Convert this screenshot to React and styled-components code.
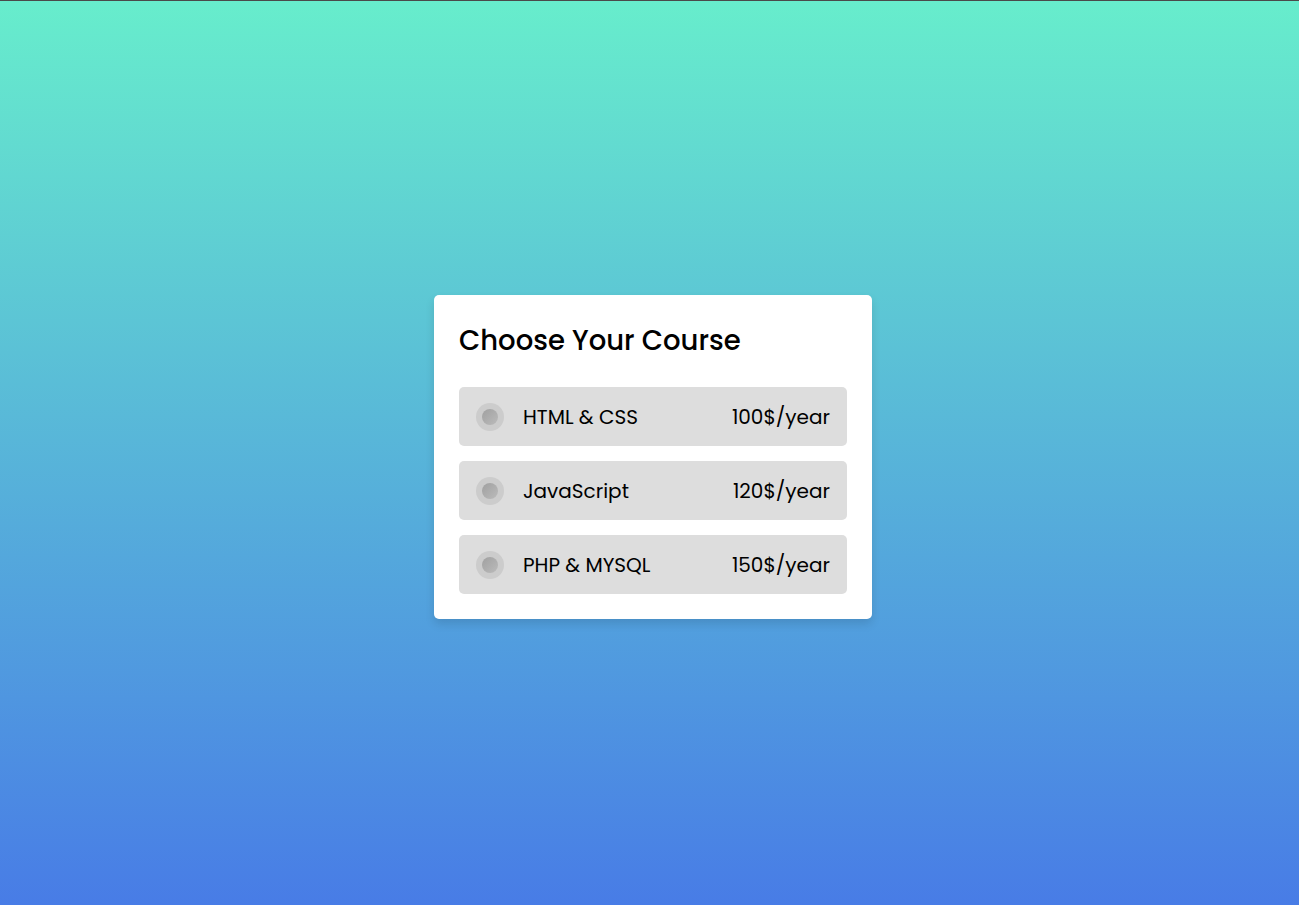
import styled, { createGlobalStyle } from "styled-components"

const GlobalStyle = createGlobalStyle`
    * {
        margin: 0;
        padding: 0;
        box-sizing: border-box;
    }
    body {
        font-family: Poppins, "Open Sans", "Noto Sans", sans-serif;
        border-top: 1px solid #4a4a4a;
    }
`

const Page = styled.div`
    min-height: 904px;
    display: flex;
    align-items: center;
    justify-content: center;
    background: linear-gradient(to bottom, #67edcc 0%, #487ce6 100%);
`

const Wrapper = styled.div`
    width: 438px;
    padding: 25px;
    margin: 8px 0 0 7px;
    background: #fff;
    border-radius: 5px;
    box-shadow: 0 5px 10px rgba(0, 0, 0, 0.12);
`

const Title = styled.h2`
    font-size: 27.5px;
    font-weight: 500;
    color: #000;
    line-height: 42px;
    margin-bottom: 25px;
`

const Options = styled.div`
    display: flex;
    flex-direction: column;
    gap: 15px;
`

const Option = styled.label`
    height: 59px;
    padding: 0 17px;
    display: flex;
    align-items: center;
    background: #dddddd;
    border-radius: 5px;
    cursor: pointer;
`

const Dot = styled.span`
    width: 28px;
    height: 28px;
    border-radius: 50%;
    background: #cccccc;
    display: flex;
    align-items: center;
    justify-content: center;
    flex-shrink: 0;

    &::before {
        content: "";
        width: 16px;
        height: 16px;
        border-radius: 50%;
        background: linear-gradient(135deg, #a0a0a0, #bbbbbb);
    }
`

const Name = styled.span`
    font-size: 20px;
    color: #000;
    margin-left: 19px;
    flex: 1;
`

const Price = styled.span`
    font-size: 20px;
    color: #000;
`

const courses = [
    { name: "HTML & CSS", price: "100$/year" },
    { name: "JavaScript", price: "120$/year" },
    { name: "PHP & MYSQL", price: "150$/year" },
]

export default function App() {
    return (
        <>
            <GlobalStyle />
            <Page>
                <Wrapper>
                    <Title>Choose Your Course</Title>
                    <Options>
                        {courses.map((c) => (
                            <Option key={c.name}>
                                <Dot />
                                <Name>{c.name}</Name>
                                <Price>{c.price}</Price>
                            </Option>
                        ))}
                    </Options>
                </Wrapper>
            </Page>
        </>
    )
}
